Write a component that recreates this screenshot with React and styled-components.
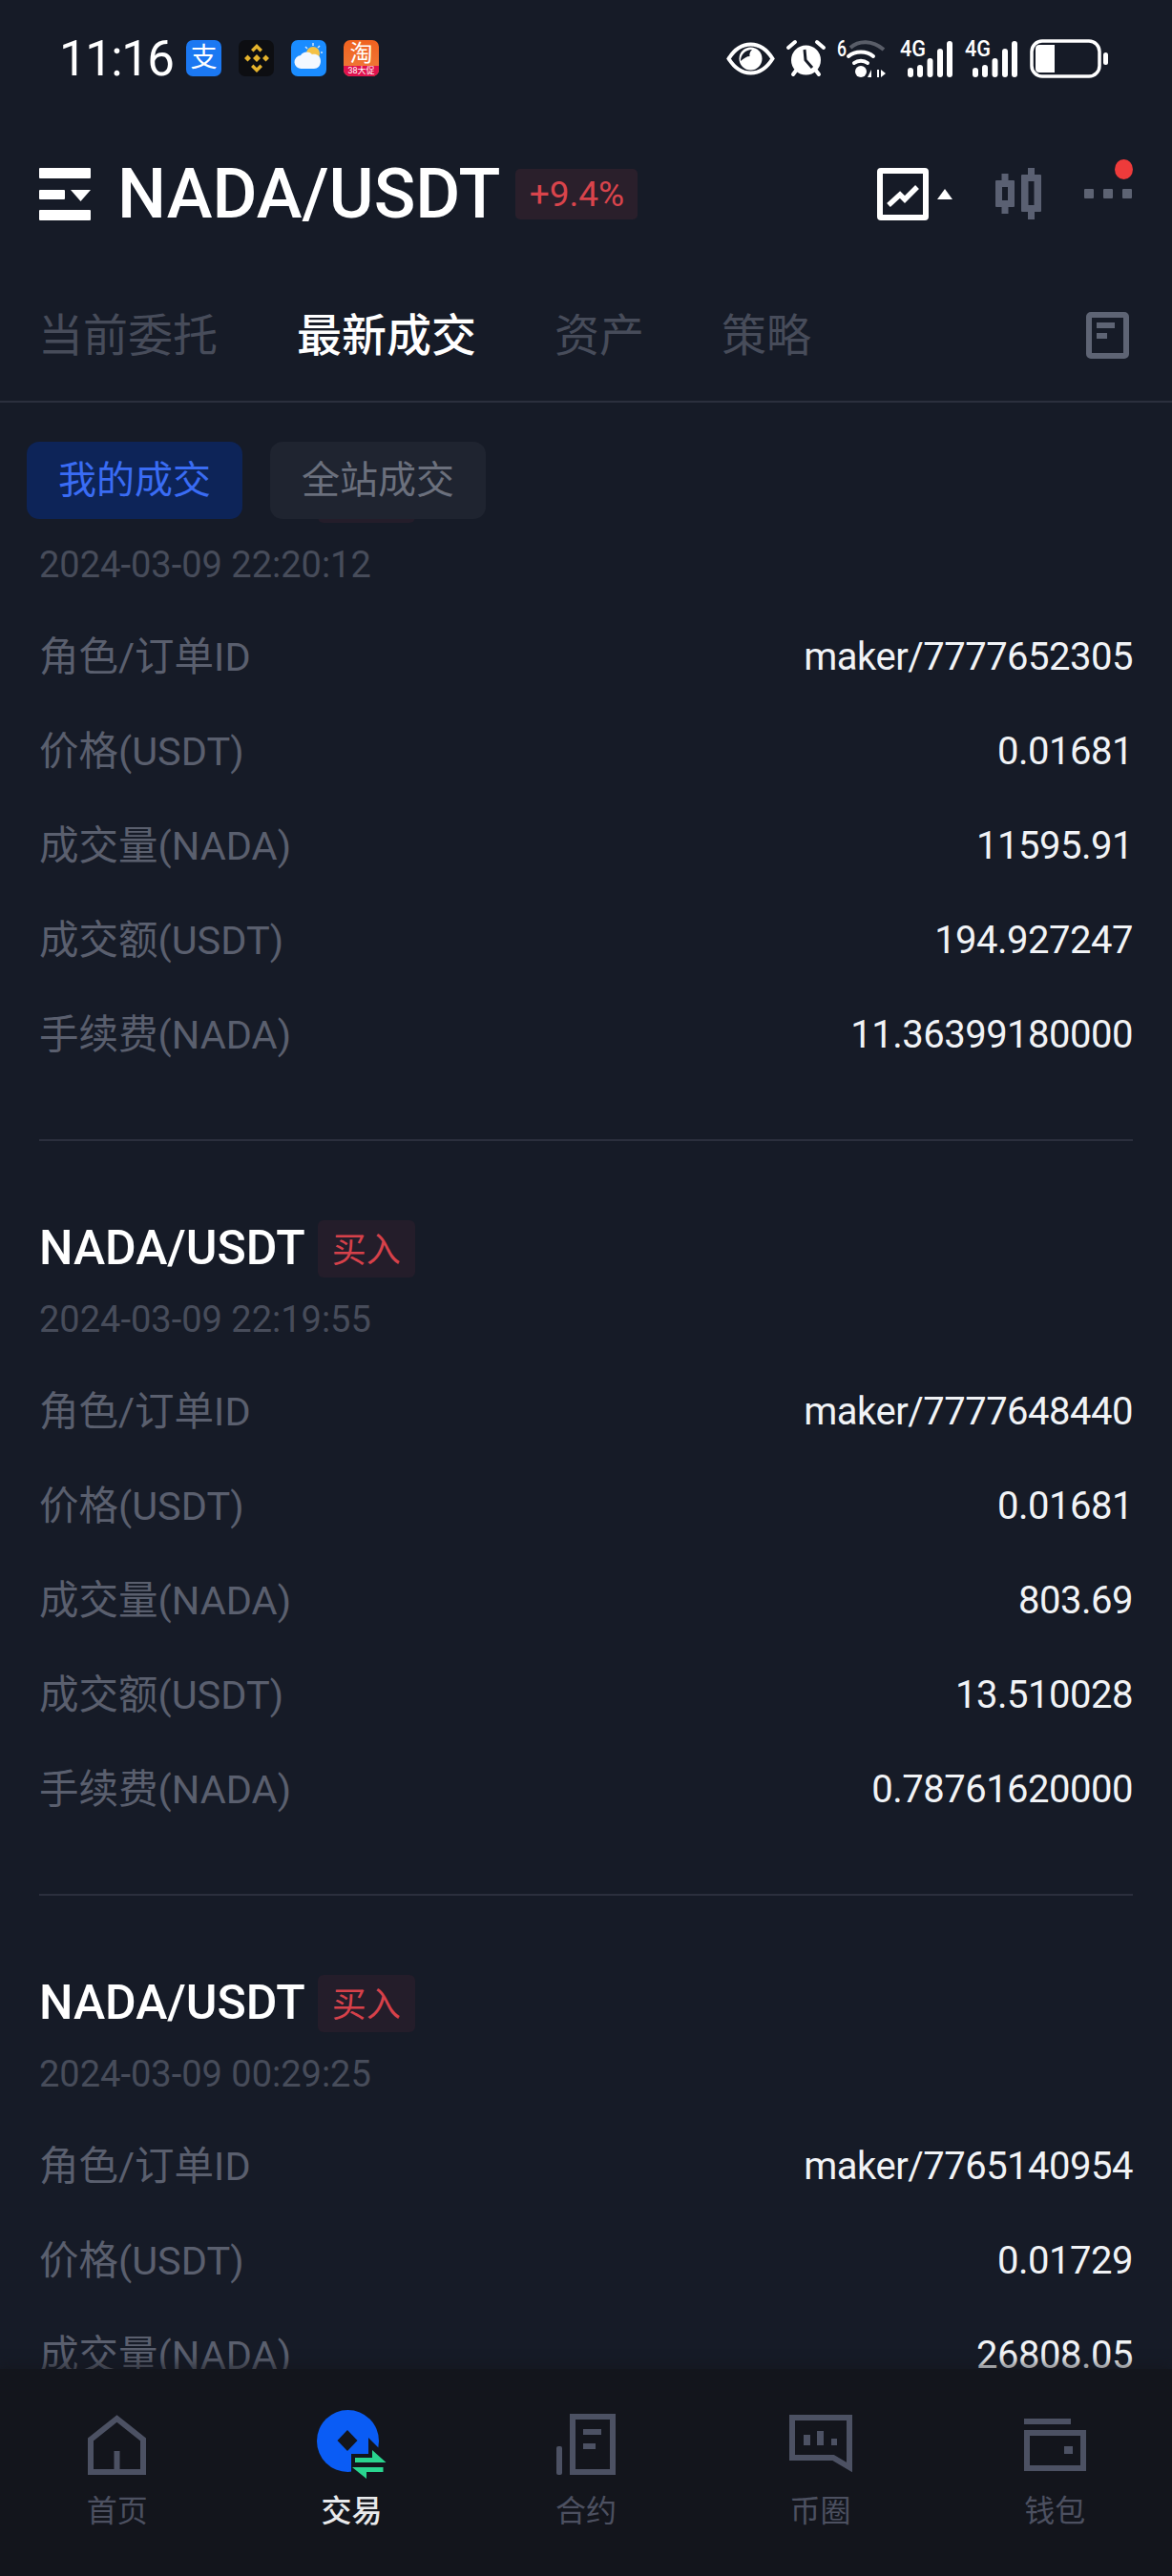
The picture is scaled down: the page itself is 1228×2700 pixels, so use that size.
import React from "react";
import styled, { createGlobalStyle } from "styled-components";

const GlobalStyle = createGlobalStyle`
  html, body {
    margin: 0;
    padding: 0;
    background: #161b27;
  }
  * {
    box-sizing: border-box;
  }
  svg {
    overflow: visible;
  }
`;

const Page = styled.div`
  width: 1228px;
  height: 2700px;
  display: flex;
  flex-direction: column;
  overflow: hidden;
  background: #161b27;
  font-family: Roboto, "Noto Sans CJK SC", sans-serif;
`;

const StatusBar = styled.div`
  height: 122px;
  flex: none;
  display: flex;
  align-items: center;
  padding: 0 67px 0 62px;
`;

const Time = styled.div`
  width: 133px;
  font-size: 51px;
  letter-spacing: -1.5px;
  color: #fff;
  line-height: 1;
`;

const AppIcons = styled.div`
  display: flex;
  gap: 18px;
`;

const AppIcon = styled.div`
  position: relative;
  width: 37px;
  height: 38px;
  border-radius: 7px;
  overflow: hidden;
  display: flex;
  align-items: center;
  justify-content: center;
  color: #fff;
  font-size: ${(p) => p.$size || 28}px;
  line-height: 1;
  background: ${(p) => p.$bg};
`;

const AppCaption = styled.div`
  position: absolute;
  left: 0;
  right: 0;
  bottom: 0;
  height: 11px;
  background: #e0124e;
  font-size: 9px;
  line-height: 11px;
  text-align: center;
`;

const TaobaoGlyph = styled.span`
  margin-top: -10px;
`;

const StatusIcons = styled.div`
  margin-left: auto;
  display: flex;
  align-items: center;
  gap: 12px;
`;

const Header = styled.div`
  height: 162px;
  flex: none;
  display: flex;
  align-items: center;
  padding: 0 42px 0 41px;
`;

const Title = styled.div`
  margin: 2px 0 0 28px;
  font-size: 72px;
  font-weight: 500;
  color: #fff;
  line-height: 1;
`;

const ChangeBadge = styled.div`
  margin-left: 16px;
  width: 128px;
  height: 53px;
  border-radius: 5px;
  background: #2a1f2b;
  color: #d9444c;
  font-size: 37px;
  display: flex;
  align-items: center;
  justify-content: center;
`;

const HeaderActions = styled.div`
  margin-left: auto;
  display: flex;
  align-items: center;
`;

const ChartToggle = styled.div`
  display: flex;
  align-items: center;
  gap: 9px;
  margin-right: 45px;
`;

const MoreButton = styled.div`
  position: relative;
  margin-left: 45px;
  display: flex;
  gap: 10px;
`;

const MoreDot = styled.div`
  width: 10px;
  height: 10px;
  border-radius: 1px;
  background: #5d6373;
`;

const RedDot = styled.div`
  position: absolute;
  top: -31px;
  right: -1px;
  width: 19px;
  height: 21px;
  border-radius: 50%;
  background: #ee3b3b;
`;

const Tabs = styled.div`
  height: 138px;
  flex: none;
  display: flex;
  align-items: center;
  padding: 0 45px 1px 40px;
  border-bottom: 2px solid #2b2f3d;
`;

const Tab = styled.div`
  margin-right: ${(p) => p.$gap}px;
  font-size: 47px;
  line-height: 1;
  font-weight: ${(p) => (p.$active ? 500 : 400)};
  color: ${(p) => (p.$active ? "#ffffff" : "#474c5a")};
`;

const TabIcon = styled.div`
  margin-left: auto;
  display: flex;
`;

const Content = styled.div`
  position: relative;
  flex: 1;
  min-height: 0;
  overflow: hidden;
`;

const FilterBar = styled.div`
  position: absolute;
  top: 0;
  left: 0;
  right: 0;
  z-index: 2;
  height: 122px;
  padding: 41px 0 0 28px;
  display: flex;
  gap: 29px;
  background: #161b27;
`;

const FilterButton = styled.div`
  width: 226px;
  height: 81px;
  padding-bottom: 7px;
  border-radius: 13px;
  display: flex;
  align-items: center;
  justify-content: center;
  font-size: 40px;
  background: ${(p) => (p.$active ? "#0d2458" : "#1f2430")};
  color: ${(p) => (p.$active ? "#3a6cf4" : "#6b707d")};
`;

const List = styled.div`
  margin-top: -17px;
`;

const Card = styled.div`
  margin: 0 41px;
  padding: 83px 0 60px;
  border-bottom: 2px solid #2b2f3d;
`;

const CardTitle = styled.div`
  height: 60px;
  display: flex;
  align-items: center;
`;

const Pair = styled.div`
  font-size: 50px;
  font-weight: 500;
  color: #fff;
  line-height: 1;
  margin-top: -2px;
`;

const SideTag = styled.div`
  margin-left: 13px;
  width: 102px;
  height: 60px;
  padding-bottom: 4px;
  border-radius: 6px;
  background: #241d2a;
  color: #d6414a;
  font-size: 36px;
  display: flex;
  align-items: center;
  justify-content: center;
`;

const CardDate = styled.div`
  margin-top: 22px;
  height: 44px;
  line-height: 44px;
  font-size: 38px;
  color: #474c5a;
`;

const Rows = styled.div`
  margin-top: 25px;
`;

const Row = styled.div`
  height: 99px;
  display: flex;
  align-items: center;
  justify-content: space-between;
`;

const RowLabel = styled.div`
  padding-bottom: 7px;
  font-size: 41.5px;
  color: #5a5f6e;
`;

const RowValue = styled.div`
  font-size: 40px;
  letter-spacing: -0.5px;
  color: #f1f3f6;
`;

const BottomNav = styled.div`
  height: 217px;
  flex: none;
  display: grid;
  grid-template-columns: repeat(5, 1fr);
  padding-top: 45px;
  background: #13151c;
  box-shadow: 0 -6px 10px rgba(19, 21, 28, 0.5);
  position: relative;
  z-index: 3;
`;

const NavItem = styled.div`
  display: flex;
  flex-direction: column;
  align-items: center;
`;

const NavIcon = styled.div`
  height: 68px;
  display: flex;
  align-items: center;
  justify-content: center;
`;

const NavLabel = styled.div`
  margin-top: 16px;
  font-size: 32px;
  line-height: 40px;
  font-weight: ${(p) => (p.$active ? 500 : 400)};
  color: ${(p) => (p.$active ? "#e8e9eb" : "#4c5060")};
`;

const NAV_GREY = "#4c5163";

const MenuIcon = () => (
  <svg width="54" height="55" viewBox="0 0 54 55" fill="#fff">
    <rect width="54" height="11" rx="1" />
    <rect y="23" width="27" height="10" rx="1" />
    <path d="M33 23h21L43.5 35z" />
    <rect y="44" width="54" height="11" rx="1" />
  </svg>
);

const ChartIcon = () => (
  <svg width="54" height="55" viewBox="0 0 54 55" fill="none">
    <rect x="3" y="3" width="48" height="49" rx="1" stroke="#fff" strokeWidth="6" />
    <path d="M12 39l12-11 5 5 13-13" stroke="#fff" strokeWidth="5.5" />
  </svg>
);

const CaretUp = () => (
  <svg width="16" height="11" viewBox="0 0 16 11" fill="#fff">
    <path d="M8 0l8 11H0z" />
  </svg>
);

const CandleIcon = () => (
  <svg width="48" height="54" viewBox="0 0 48 54" fill="#5a6072">
    <rect x="6.5" y="6" width="7" height="7" />
    <rect x="6.5" y="41" width="7" height="7" />
    <path fillRule="evenodd" d="M1 13h18a1 1 0 0 1 1 1v26a1 1 0 0 1-1 1H1a1 1 0 0 1-1-1V14a1 1 0 0 1 1-1zm6 7v14h6V20z" />
    <rect x="34" y="0" width="7" height="7" />
    <rect x="34" y="46" width="7" height="8" />
    <path fillRule="evenodd" d="M28 7h19a1 1 0 0 1 1 1v37a1 1 0 0 1-1 1H28a1 1 0 0 1-1-1V8a1 1 0 0 1 1-1zm6.500 7v25h6V14z" />
  </svg>
);

const DocIcon = () => (
  <svg width="45" height="49" viewBox="0 0 45 49" fill="#5e6474">
    <rect x="3" y="3" width="39" height="43" rx="2" fill="none" stroke="#5e6474" strokeWidth="6" />
    <rect x="11" y="11" width="19" height="6" />
    <rect x="11" y="22" width="11" height="6" />
  </svg>
);

const EyeIcon = () => (
  <svg width="51" height="35" viewBox="0 0 51 35" fill="none">
    <path d="M2.500 17.500C9 7 16.500 2.500 25.500 2.500S42 7 48.500 17.500C42 28 34.500 32.500 25.500 32.500S9 28 2.500 17.500z" stroke="#fff" strokeWidth="4" />
    <circle cx="25.500" cy="17.500" r="12" fill="#fff" />
    <path d="M15 20c0-7 5-12 12-12-2 2-3 4-2.500 7-3 0-6 2-9.500 5z" fill="#161b27" />
  </svg>
);

const AlarmIcon = () => (
  <svg width="41" height="38" viewBox="0 0 41 38" fill="none">
    <circle cx="20.500" cy="21" r="15.500" fill="#fff" />
    <path d="M2 8l7-6M39 8l-7-6M7 36l3-4M34 36l-3-4" stroke="#fff" strokeWidth="4" strokeLinecap="round" />
    <path d="M19 10l1 11 7 8" stroke="#161b27" strokeWidth="3" />
  </svg>
);

const WifiIcon = () => (
  <svg width="54" height="42" viewBox="0 0 54 42" fill="none">
    <text x="0" y="19" fontFamily="Roboto, sans-serif" fontSize="24" fontWeight="500" fill="#fff" textLength="10" lengthAdjust="spacingAndGlyphs">6</text>
    <path d="M14 10c9-8 23-8 35 2" stroke="#595d68" strokeWidth="4" />
    <path d="M12 19c7-6 19-6 26 0" stroke="#fff" strokeWidth="4" strokeLinecap="round" />
    <path d="M18 26c4-3 10-3 14 0" stroke="#fff" strokeWidth="4" strokeLinecap="round" />
    <circle cx="25" cy="35" r="6" fill="#fff" />
    <path d="M36 41V33l-4 8zM44 41V33h-2v8zM46 33v8l5-4z" fill="#fff" />
  </svg>
);

const SignalIcon = () => (
  <svg width="56" height="40" viewBox="0 0 56 40" fill="#fff">
    <text x="0" y="18" fontFamily="Roboto, sans-serif" fontSize="24" fontWeight="500" textLength="27" lengthAdjust="spacingAndGlyphs">4G</text>
    {[
      [8, 30],
      [18, 27],
      [28.500, 20],
      [39, 10],
      [49, 2],
    ].map(([x, y]) => (
      <rect key={x} x={x} y={y} width="6" height={40 - y} rx="3" />
    ))}
  </svg>
);

const BatteryIcon = () => (
  <svg width="82" height="41" viewBox="0 0 82 41" fill="none">
    <rect x="2" y="2" width="71" height="37" rx="11" stroke="#fff" strokeWidth="3.500" />
    <path d="M10 6h16v29H10a4 4 0 0 1-4-4V10a4 4 0 0 1 4-4z" fill="#fff" />
    <rect x="77" y="14" width="5" height="13" rx="2.500" fill="#fff" />
  </svg>
);

const BinanceMark = () => (
  <svg width="26" height="30" viewBox="0 0 26 30" fill="#e5b32c">
    <path d="M13 0l6 6-2.500 2.500L13 5 9.500 8.500 7 6zM13 30l-6-6 2.500-2.500L13 25l3.500-3.500L19 24zM3.500 11.500L7 15l-3.500 3.500L0 15zM22.500 11.500L26 15l-3.500 3.500L19 15zM13 11l4 4-4 4-4-4z" />
  </svg>
);

const WeatherMark = () => (
  <svg width="37" height="38" viewBox="0 0 37 38">
    <circle cx="23" cy="14" r="7" fill="#f4c145" />
    <path d="M23 3v3M33 13h-2M30 6l-2 2M15 7l2 2" stroke="#cfe4ff" strokeWidth="1.500" />
    <path d="M11 30a7 7 0 0 1-1-14c2-4 9-5 12-1 4-1 9 1 9 7 0 5-3 8-7 8z" fill="#f3f8ff" />
  </svg>
);

const HomeIcon = () => (
  <svg width="61" height="63" viewBox="0 0 61 63" fill="none" stroke={NAV_GREY} strokeWidth="6">
    <path d="M3 60V26L30.500 4 58 26v34z" />
    <path d="M30.500 38v22" />
  </svg>
);

const TradeIcon = () => (
  <svg width="73" height="72" viewBox="0 0 73 72">
    <ellipse cx="32.500" cy="32.500" rx="32.500" ry="32.500" fill="#0a5cf5" />
    <path d="M32 21l10.500 11L32 43 21.500 32z" fill="#13151c" />
    <path d="M54 29l13 13v6h6v24H36V46h18z" fill="#13151c" />
    <path d="M40 50h18v-8l14.500 13H40z" fill="#2ad58f" />
    <path d="M69.500 60H37l15 12v-7h17.500z" fill="#2ad58f" />
  </svg>
);

const ContractIcon = () => (
  <svg width="62" height="64" viewBox="0 0 62 64" fill={NAV_GREY}>
    <rect y="34" width="6" height="30" rx="2" />
    <rect x="17" y="3" width="42" height="58" fill="none" stroke={NAV_GREY} strokeWidth="6" />
    <rect x="28" y="16" width="19" height="6" />
    <rect x="28" y="31" width="13" height="6" />
  </svg>
);

const ChatIcon = () => (
  <svg width="66" height="62" viewBox="0 0 66 62" fill={NAV_GREY}>
    <path d="M3 3h60v52L46 45H3z" fill="none" stroke={NAV_GREY} strokeWidth="6" />
    <rect x="15" y="21" width="7" height="11" />
    <rect x="29" y="17" width="7" height="15" />
    <rect x="44" y="25" width="6" height="7" />
  </svg>
);

const WalletIcon = () => (
  <svg width="65" height="55" viewBox="0 0 65 55" fill={NAV_GREY}>
    <rect width="49" height="6" />
    <rect x="3" y="15" width="59" height="37" fill="none" stroke={NAV_GREY} strokeWidth="6" />
    <rect x="42" y="29" width="9" height="8" />
  </svg>
);

const trades = [
  {
    time: "2024-03-09 22:20:12",
    id: "maker/7777652305",
    price: "0.01681",
    amount: "11595.91",
    total: "194.927247",
    fee: "11.36399180000",
  },
  {
    time: "2024-03-09 22:19:55",
    id: "maker/7777648440",
    price: "0.01681",
    amount: "803.69",
    total: "13.510028",
    fee: "0.78761620000",
  },
  {
    time: "2024-03-09 00:29:25",
    id: "maker/7765140954",
    price: "0.01729",
    amount: "26808.05",
    total: "463.512184",
    fee: "26.27188900000",
  },
];

const navItems = [
  { label: "首页", icon: <HomeIcon /> },
  { label: "交易", icon: <TradeIcon />, active: true },
  { label: "合约", icon: <ContractIcon /> },
  { label: "币圈", icon: <ChatIcon /> },
  { label: "钱包", icon: <WalletIcon /> },
];

const TradeCard = ({ trade }) => (
  <Card>
    <CardTitle>
      <Pair>NADA/USDT</Pair>
      <SideTag>买入</SideTag>
    </CardTitle>
    <CardDate>{trade.time}</CardDate>
    <Rows>
      <Row>
        <RowLabel>角色/订单ID</RowLabel>
        <RowValue>{trade.id}</RowValue>
      </Row>
      <Row>
        <RowLabel>价格(USDT)</RowLabel>
        <RowValue>{trade.price}</RowValue>
      </Row>
      <Row>
        <RowLabel>成交量(NADA)</RowLabel>
        <RowValue>{trade.amount}</RowValue>
      </Row>
      <Row>
        <RowLabel>成交额(USDT)</RowLabel>
        <RowValue>{trade.total}</RowValue>
      </Row>
      <Row>
        <RowLabel>手续费(NADA)</RowLabel>
        <RowValue>{trade.fee}</RowValue>
      </Row>
    </Rows>
  </Card>
);

const App = () => {
  return (
    <Page>
      <GlobalStyle />
      <StatusBar>
        <Time>11:16</Time>
        <AppIcons>
          <AppIcon $bg="#1b78f2">支</AppIcon>
          <AppIcon $bg="#0d0e12">
            <BinanceMark />
          </AppIcon>
          <AppIcon $bg="#1a8cff">
            <WeatherMark />
          </AppIcon>
          <AppIcon $bg="linear-gradient(#f0621f, #ef7d3c)" $size={24}>
            <TaobaoGlyph>淘</TaobaoGlyph>
            <AppCaption>38大促</AppCaption>
          </AppIcon>
        </AppIcons>
        <StatusIcons>
          <EyeIcon />
          <AlarmIcon />
          <WifiIcon />
          <SignalIcon />
          <SignalIcon />
          <BatteryIcon />
        </StatusIcons>
      </StatusBar>

      <Header>
        <MenuIcon />
        <Title>NADA/USDT</Title>
        <ChangeBadge>+9.4%</ChangeBadge>
        <HeaderActions>
          <ChartToggle>
            <ChartIcon />
            <CaretUp />
          </ChartToggle>
          <CandleIcon />
          <MoreButton>
            <MoreDot />
            <MoreDot />
            <MoreDot />
            <RedDot />
          </MoreButton>
        </HeaderActions>
      </Header>

      <Tabs>
        <Tab $gap={83}>当前委托</Tab>
        <Tab $gap={82} $active>最新成交</Tab>
        <Tab $gap={81}>资产</Tab>
        <Tab>策略</Tab>
        <TabIcon>
          <DocIcon />
        </TabIcon>
      </Tabs>

      <Content>
        <FilterBar>
          <FilterButton $active>我的成交</FilterButton>
          <FilterButton>全站成交</FilterButton>
        </FilterBar>
        <List>
          {trades.map((trade) => (
            <TradeCard key={trade.time} trade={trade} />
          ))}
        </List>
      </Content>

      <BottomNav>
        {navItems.map((item) => (
          <NavItem key={item.label}>
            <NavIcon>{item.icon}</NavIcon>
            <NavLabel $active={item.active}>{item.label}</NavLabel>
          </NavItem>
        ))}
      </BottomNav>
    </Page>
  );
};

export default App;
